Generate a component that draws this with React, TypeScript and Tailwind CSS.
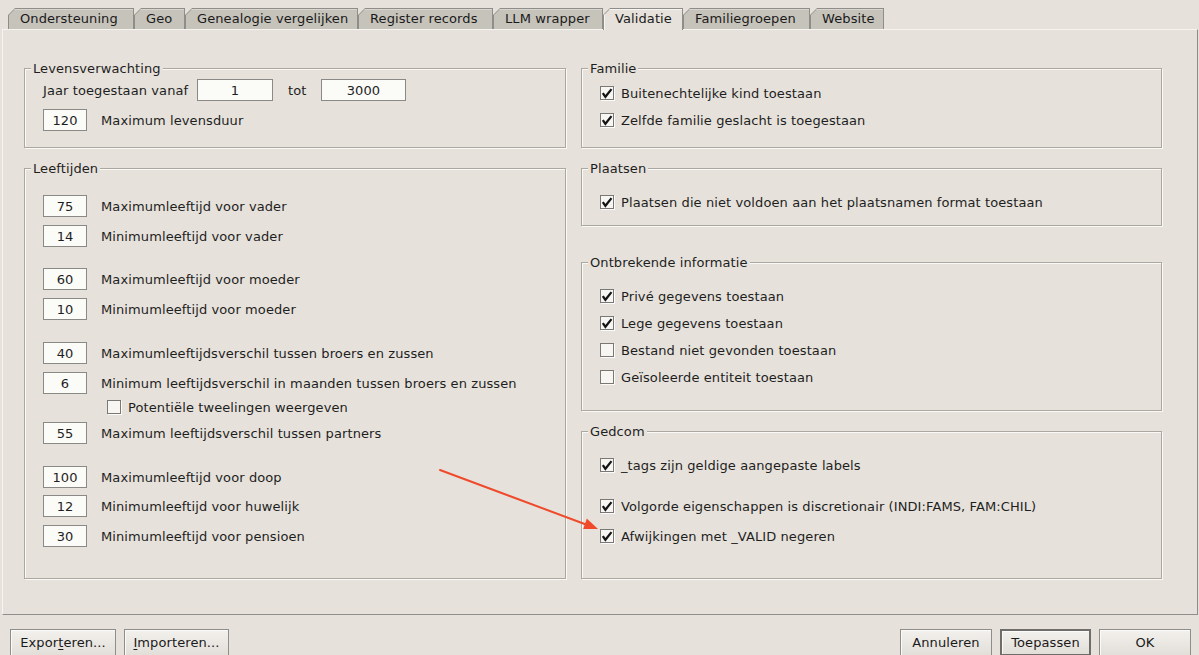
import React from "react";

type Row = { v: string; l: string; mt: string };

const ageRows: (Row | "twins")[] = [
  { v: "75", l: "Maximumleeftijd voor vader", mt: "mt-[26px]" },
  { v: "14", l: "Minimumleeftijd voor vader", mt: "mt-[8px]" },
  { v: "60", l: "Maximumleeftijd voor moeder", mt: "mt-[21px]" },
  { v: "10", l: "Minimumleeftijd voor moeder", mt: "mt-[8px]" },
  { v: "40", l: "Maximumleeftijdsverschil tussen broers en zussen", mt: "mt-[22px]" },
  { v: "6", l: "Minimum leeftijdsverschil in maanden tussen broers en zussen", mt: "mt-[8px]" },
  "twins",
  { v: "55", l: "Maximum leeftijdsverschil tussen partners", mt: "mt-[6px]" },
  { v: "100", l: "Maximumleeftijd voor doop", mt: "mt-[22px]" },
  { v: "12", l: "Minimumleeftijd voor huwelijk", mt: "mt-[7px]" },
  { v: "30", l: "Minimumleeftijd voor pensioen", mt: "mt-[8px]" },
];

const tabs = [
  { label: "Ondersteuning", w: "w-[126px]" },
  { label: "Geo", w: "w-[51px]" },
  { label: "Genealogie vergelijken", w: "w-[173px]" },
  { label: "Register records", w: "w-[135px]" },
  { label: "LLM wrapper", w: "w-[110px]" },
  { label: "Validatie", w: "w-[80px]", active: true },
  { label: "Familiegroepen", w: "w-[127px]" },
  { label: "Website", w: "w-[74px]" },
];

function Tab({ label, w, active }: { label: string; w: string; active?: boolean }) {
  return (
    <div
      className={`relative ${w} ${active ? "z-10 h-[22px] -mb-[1px]" : "h-[21px]"}`}
    >
      <div className="absolute inset-0 bg-[#8f8d89] [clip-path:polygon(0_7px,7px_0,100%_0,100%_100%,0_100%)]" />
      <div
        className={`absolute left-[1px] right-[1px] top-[1px] bottom-0 [clip-path:polygon(0_6px,6px_0,100%_0,100%_100%,0_100%)] ${
          active
            ? "bg-[#e6e2db] shadow-[inset_1px_1px_0_#f7f5f1]"
            : "bg-[#c6c3bb] shadow-[inset_0_1px_0_#d9d6cf]"
        }`}
      />
      <span className="relative flex h-[21px] items-center pl-[12px] pt-[1px] text-[13px] tracking-[0.1px] text-[#1a1a1a]">
        {label}
      </span>
    </div>
  );
}

function Field({ value, w }: { value: string; w: string }) {
  return (
    <div
      className={`${w} flex h-[22px] shrink-0 items-center justify-center border border-[#8b8985] bg-[#fbfbf8] pt-[2px] text-[13px] text-[#1e1e1e]`}
    >
      {value}
    </div>
  );
}

function Check({ on }: { on: boolean }) {
  return (
    <div className="relative h-[14px] w-[14px] shrink-0 border border-[#7a7874] bg-[#f7f6f3] shadow-[1px_1px_0_#fcfbf9]">
      {on && (
        <svg viewBox="0 0 12 12" className="absolute left-0 top-0 h-[12px] w-[12px]">
          <path
            d="M2.4 7 L4.4 9.8 L9.8 3"
            fill="none"
            stroke="#141414"
            strokeWidth="2.2"
            strokeLinecap="square"
            strokeLinejoin="miter"
          />
        </svg>
      )}
    </div>
  );
}

function CheckRow({ label, on, mt }: { label: string; on: boolean; mt: string }) {
  return (
    <div className={`flex h-[20px] items-center gap-[7px] ${mt}`}>
      <Check on={on} />
      <span className="pt-[2px] text-[13px] text-[#1e1e1e]">{label}</span>
    </div>
  );
}

function Group({
  title,
  h,
  mt,
  pad,
  children,
}: {
  title: string;
  h: string;
  mt?: string;
  pad: string;
  children: React.ReactNode;
}) {
  return (
    <div
      className={`relative ${h} ${mt ?? ""} ${pad} border border-[#aba8a2] shadow-[1px_1px_0_#faf9f6,inset_1px_1px_0_#faf9f6]`}
    >
      <span className="absolute -top-[9px] left-[6px] bg-[#e6e2db] px-[2px] text-[13px] leading-[17px] text-[#1e1e1e]">
        {title}
      </span>
      {children}
    </div>
  );
}

function Button({
  children,
  w,
  primary,
}: {
  children: React.ReactNode;
  w: string;
  primary?: boolean;
}) {
  return (
    <div
      className={`${w} flex h-[27px] items-center justify-center bg-gradient-to-b from-[#f3f1ed] to-[#e2dfd9] text-[13px] tracking-[0.1px] text-[#1a1a1a] ${
        primary
          ? "border-2 border-[#6f6d6a] shadow-[inset_1px_1px_0_#fbfaf8]"
          : "border border-[#8f8d89] shadow-[inset_1px_1px_0_#fbfaf8]"
      }`}
    >
      {children}
    </div>
  );
}

export default function App() {
  return (
    <div className="relative h-[655px] w-[1199px] overflow-hidden bg-[#e6e2db] font-['DejaVu_Sans',sans-serif] text-[13px] tracking-[0.1px] text-[#1e1e1e]">
      {/* tab strip */}
      <div className="flex h-[29px] items-end pl-[8px]">
        {tabs.map((t) => (
          <Tab key={t.label} label={t.label} w={t.w} active={t.active} />
        ))}
      </div>

      {/* tab content */}
      <div className="ml-[2px] flex h-[586px] w-[1196px] gap-[15px] border-b border-l border-r border-t border-b-[#8f8d89] border-l-[#f6f4f0] border-r-[#8f8d89] border-t-[#f6f4f0] pl-[21px] pt-[38px]">
        {/* left column */}
        <div className="flex w-[542px] flex-col">
          <Group title="Levensverwachting" h="h-[80px]" pad="pl-[18px] pt-[10px]">
            <div className="flex h-[22px] items-center">
              <span className="w-[154px] shrink-0 pt-[2px]">Jaar toegestaan vanaf</span>
              <Field value="1" w="w-[76px]" />
              <span className="w-[48px] shrink-0 pl-[15px] pt-[2px]">tot</span>
              <Field value="3000" w="w-[85px]" />
            </div>
            <div className="mt-[8px] flex h-[22px] items-center gap-[14px]">
              <Field value="120" w="w-[44px]" />
              <span className="pt-[2px]">Maximum levensduur</span>
            </div>
          </Group>

          <Group title="Leeftijden" h="h-[411px]" mt="mt-[20px]" pad="pl-[18px]">
            {ageRows.map((r, i) =>
              r === "twins" ? (
                <div key={i} className="mt-[4px] flex h-[18px] items-center gap-[7px] pl-[64px]">
                  <Check on={false} />
                  <span className="pt-[2px]">Potentiële tweelingen weergeven</span>
                </div>
              ) : (
                <div key={i} className={`flex h-[22px] items-center gap-[14px] ${r.mt}`}>
                  <Field value={r.v} w="w-[44px]" />
                  <span className="pt-[2px]">{r.l}</span>
                </div>
              )
            )}
          </Group>
        </div>

        {/* right column */}
        <div className="flex w-[581px] flex-col">
          <Group title="Familie" h="h-[80px]" pad="pl-[18px] pt-[14px]">
            <CheckRow on label="Buitenechtelijke kind toestaan" mt="" />
            <CheckRow on label="Zelfde familie geslacht is toegestaan" mt="mt-[7px]" />
          </Group>

          <Group title="Plaatsen" h="h-[58px]" mt="mt-[20px]" pad="pl-[18px] pt-[23px]">
            <CheckRow on label="Plaatsen die niet voldoen aan het plaatsnamen format toestaan" mt="" />
          </Group>

          <Group title="Ontbrekende informatie" h="h-[149px]" mt="mt-[36px]" pad="pl-[18px] pt-[23px]">
            <CheckRow on label="Privé gegevens toestaan" mt="" />
            <CheckRow on label="Lege gegevens toestaan" mt="mt-[7px]" />
            <CheckRow on={false} label="Bestand niet gevonden toestaan" mt="mt-[7px]" />
            <CheckRow on={false} label="Geïsoleerde entiteit toestaan" mt="mt-[7px]" />
          </Group>

          <Group title="Gedcom" h="h-[148px]" mt="mt-[20px]" pad="pl-[18px] pt-[23px]">
            <CheckRow on label="_tags zijn geldige aangepaste labels" mt="" />
            <CheckRow on label="Volgorde eigenschappen is discretionair (INDI:FAMS, FAM:CHIL)" mt="mt-[21px]" />
            <CheckRow on label="Afwijkingen met _VALID negeren" mt="mt-[10px]" />
          </Group>
        </div>
      </div>

      {/* dialog buttons */}
      <div className="mt-[14px] flex items-start justify-between pl-[10px] pr-[8px]">
        <div className="flex gap-[8px]">
          <Button w="w-[106px]">
            <span>
              Expor<span className="underline underline-offset-2">t</span>eren...
            </span>
          </Button>
          <Button w="w-[105px]">
            <span>
              <span className="underline underline-offset-2">I</span>mporteren...
            </span>
          </Button>
        </div>
        <div className="flex gap-[8px]">
          <Button w="w-[92px]">Annuleren</Button>
          <Button w="w-[91px]" primary>
            Toepassen
          </Button>
          <Button w="w-[92px]">OK</Button>
        </div>
      </div>

      {/* annotation arrow pointing at the _VALID option */}
      <svg
        className="pointer-events-none absolute left-0 top-0"
        width="1199"
        height="655"
        viewBox="0 0 1199 655"
      >
        <line x1="440" y1="470" x2="586" y2="524.5" stroke="#ef4a2c" strokeWidth="2" strokeLinecap="round" />
        <polygon points="598,529 583.2,529 586.8,518.6" fill="#ef4a2c" />
      </svg>
    </div>
  );
}
